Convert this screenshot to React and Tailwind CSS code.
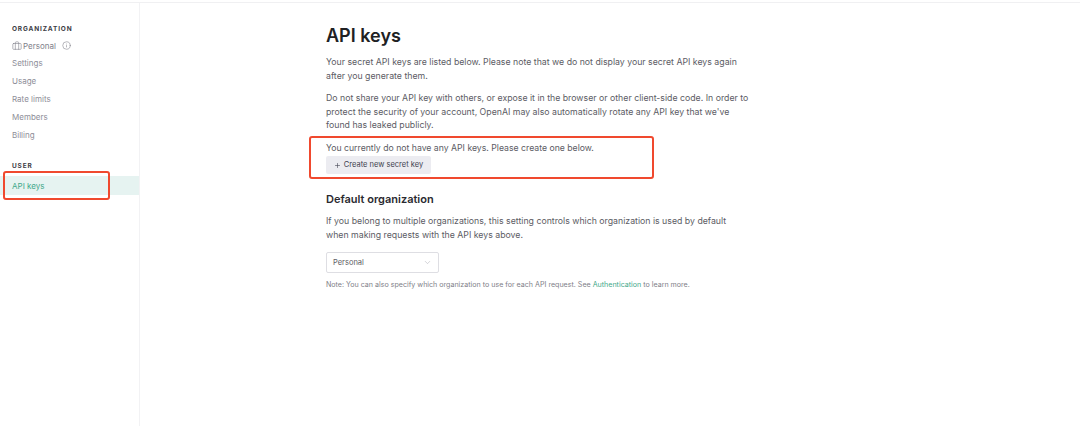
import { Briefcase, Info, Plus, ChevronDown } from 'lucide-react';

const orgLinks = ['Settings', 'Usage', 'Rate limits', 'Members', 'Billing'];

const App = () => {
  return (
    <div className="relative h-[426px] w-[1080px] overflow-hidden bg-white font-['Inter',sans-serif]">
      {/* Top rule */}
      <div className="h-[3px] border-b border-[#f0f0f2]" />

      <div className="flex h-[423px]">
        {/* Sidebar */}
        <aside className="w-[140px] shrink-0 border-r border-[#f2f2f4] pt-[21px]">
          <h4 className="pl-3 text-[6.5px] leading-[10px] font-bold tracking-[0.85px] text-[#3c3c44]">ORGANIZATION</h4>
          <div className="mt-[3px] flex h-[17px] items-center pl-3 text-[8px] text-[#80808a]">
            <Briefcase className="mr-[1px] h-[10px] w-[10px]" strokeWidth={1.4} />
            <span>Personal</span>
            <Info className="ml-[6px] h-[9px] w-[9px]" strokeWidth={1.5} />
          </div>
          {orgLinks.map((link) => (
            <div key={link} className="flex h-[18px] items-center pl-3 text-[8px] text-[#8e8e98]">
              {link}
            </div>
          ))}
          <h4 className="mt-[17px] pl-3 text-[6.5px] leading-[10px] font-bold tracking-[0.85px] text-[#3c3c44]">USER</h4>
          <div className="mt-[5px] flex h-[19px] items-center bg-[#e6f3f1] pl-3 text-[8px] text-[#3fa88a]">API keys</div>
        </aside>

        {/* Content */}
        <main className="w-[430px] pl-[186px] pt-[22px]">
          <h1 className="text-[18px] leading-[22px] font-semibold text-[#202123]">API keys</h1>
          <p className="mt-[9px] w-[424px] text-[8.75px] leading-[13.5px] text-[#5c5c64]">
            Your secret API keys are listed below. Please note that we do not display your secret API keys again after you generate them.
          </p>
          <p className="mt-[9px] w-[424px] text-[8.75px] leading-[13.5px] text-[#5c5c64]">
            Do not share your API key with others, or expose it in the browser or other client-side code. In order to protect the security of your account, OpenAI may also automatically rotate any API key that we've found has leaked publicly.
          </p>
          <p className="mt-[9.5px] w-[424px] text-[8.7px] leading-[13.5px] text-[#5c5c64]">
            You currently do not have any API keys. Please create one below.
          </p>
          <button className="mt-[0.5px] flex h-[18px] w-[105px] items-center justify-center rounded-[2px] bg-[#ececf1] text-[7.5px] text-[#40414f]">
            <Plus className="mr-[3px] h-[7px] w-[7px]" strokeWidth={2} />
            Create new secret key
          </button>
          <h2 className="mt-[17px] whitespace-nowrap text-[11px] leading-[16px] font-semibold text-[#2a2a30]">Default organization</h2>
          <p className="mt-[8px] w-[424px] text-[8.75px] leading-[13.5px] text-[#5c5c64]">
            If you belong to multiple organizations, this setting controls which organization is used by default when making requests with the API keys above.
          </p>
          <div className="mt-[10px] flex h-[21px] w-[113px] items-center justify-between rounded-[2px] border border-[#dedee3] px-[6px] text-[7.5px] text-[#5c5c64]">
            Personal
            <ChevronDown className="h-[9px] w-[9px] text-[#b4b4bc]" strokeWidth={1.5} />
          </div>
          <p className="mt-[7px] w-[430px] whitespace-nowrap text-[7.1px] leading-[10px] text-[#808088]">
            Note: You can also specify which organization to use for each API request. See <span className="text-[#3fa88a]">Authentication</span> to learn more.
          </p>
        </main>
      </div>

      {/* Red annotation boxes */}
      <div className="absolute left-[3px] top-[171px] h-[29px] w-[107px] rounded-[3px] border-2 border-[#f0492e]" />
      <div className="absolute left-[309px] top-[136px] h-[43px] w-[345px] rounded-[3px] border-2 border-[#f0492e]" />
    </div>
  );
};

export default App;
